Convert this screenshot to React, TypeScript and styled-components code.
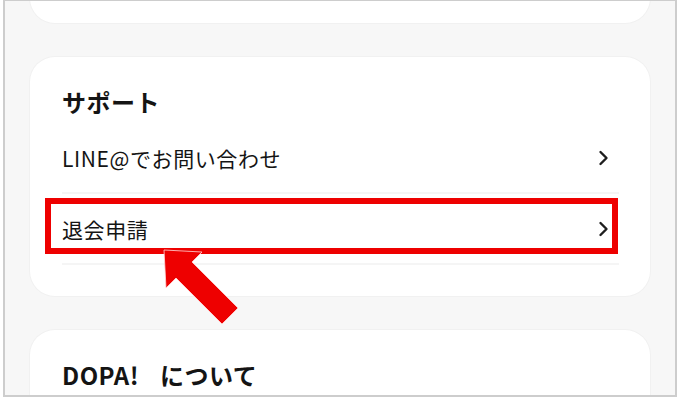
import * as React from "react"
import styled, { createGlobalStyle } from "styled-components"

const GlobalStyle = createGlobalStyle`
  html, body {
    margin: 0;
    padding: 0;
    background: #ffffff;
  }
  body {
    font-family: "Noto Sans CJK JP", "Noto Sans", sans-serif;
    color: #141414;
  }
`

const Frame = styled.div`
  position: relative;
  box-sizing: border-box;
  width: 674px;
  height: 397px;
  margin: 0 0 0 3px;
  border: 2px solid #cdcdcd;
  border-top-width: 1px;
  background: #f7f7f7;
  overflow: hidden;
`

// scrolled list: the first card is mostly out of view
const CardList = styled.div`
  display: flex;
  flex-direction: column;
  gap: 34px;
  padding: 0 25px;
  margin-top: -178px;
`

const Card = styled.section<{ $height?: number }>`
  box-sizing: border-box;
  background: #ffffff;
  border-radius: 25px;
  box-shadow: 0 0 0 1px #f1f1f1;
  padding: 30px 31px 31px 32px;
  min-height: ${props => (props.$height ? `${props.$height}px` : "auto")};
`

const CardTitle = styled.h2`
  margin: 0 0 6px;
  font-size: 24px;
  line-height: 30px;
  font-weight: 700;
  letter-spacing: 0.5px;
  word-spacing: 15px;
`

const Row = styled.div<{ $highlight?: boolean }>`
  position: relative;
  display: flex;
  align-items: center;
  justify-content: space-between;
  height: 69px;
  padding-right: 10px;
  border-bottom: 2px solid #f5f5f5;
  font-size: 21px;
  cursor: pointer;

  &::after {
    content: "";
    display: ${props => (props.$highlight ? "block" : "none")};
    position: absolute;
    left: -17px;
    right: 1px;
    top: 4px;
    bottom: 9px;
    border: 6px solid #ee0000;
  }
`

const RowLabel = styled.span`
  letter-spacing: 0.6px;
`

const Pointer = styled.svg`
  position: absolute;
  left: 145px;
  top: 239px;
  width: 100px;
  height: 95px;
  pointer-events: none;
`

const Chevron = () => (
  <svg width="16" height="20" viewBox="0 0 16 20" fill="none">
    <path
      d="M7.5 4L13.5 10L7.5 16"
      stroke="#1e1e1e"
      strokeWidth="2.4"
      strokeLinecap="round"
      strokeLinejoin="round"
    />
  </svg>
)

const supportItems = [
  { label: "LINE@でお問い合わせ", highlight: false },
  { label: "退会申請", highlight: true },
]

export default function App() {
  return (
    <>
      <GlobalStyle />
      <Frame>
        <CardList>
          <Card $height={200} />
          <Card>
            <CardTitle>サポート</CardTitle>
            {supportItems.map(item => (
              <Row key={item.label} $highlight={item.highlight}>
                <RowLabel>{item.label}</RowLabel>
                <Chevron />
              </Row>
            ))}
          </Card>
          <Card $height={200}>
            <CardTitle>DOPA! について</CardTitle>
          </Card>
        </CardList>
        <Pointer viewBox="150 240 100 95">
          <polygon
            points="164,250 202,252 192,262 238,308 222,324 176,278 166,288"
            fill="#ee0000"
            stroke="#ffd9d9"
            strokeWidth="0.8"
            strokeLinejoin="miter"
          />
        </Pointer>
      </Frame>
    </>
  )
}
